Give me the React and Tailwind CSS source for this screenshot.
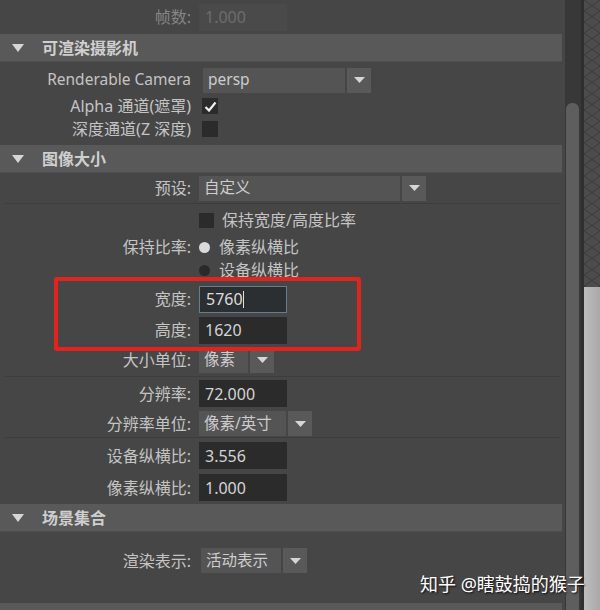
import React from 'react'

const font = "font-['Noto_Sans','Noto_Sans_CJK_SC',sans-serif]"

// down-pointing triangle used by section headers and option menus
const Tri = ({ w = 12, h = 8, className = '' }) => (
  <svg width={w} height={h} viewBox={`0 0 ${w} ${h}`} className={className}>
    <polygon points={`0,0 ${w},0 ${w / 2},${h}`} fill="#d6d6d6" />
  </svg>
)

const Header = ({ title }) => (
  <div className="h-[28px] mr-[3px] bg-[#595959] flex items-center border-b border-[#4f4f4f]">
    <Tri className="ml-[12px]" />
    <span className="ml-[18px] text-[16px] font-bold text-[#cfcfcf]">{title}</span>
  </div>
)

const Row = ({ h, label, dim, latin, children, gap = 'ml-[8px]' }) => (
  <div className={`flex items-center ${h}`}>
    <div
      className={`w-[191px] text-right whitespace-nowrap ${latin ? 'text-[15.5px]' : 'text-[16px]'} ${
        dim ? 'text-[#858585]' : 'text-[#c4c4c4]'
      }`}
    >
      {label}
    </div>
    <div className={`${gap} flex items-center`}>{children}</div>
  </div>
)

const Field = ({ value, focused, disabled }) => (
  <div
    className={`w-[88px] h-[27px] flex items-center pl-[6px] text-[16px] ${
      disabled
        ? 'bg-[#4a4a4a] text-[#6d6d6d]'
        : focused
        ? 'bg-[#2c2f31] border border-[#627d92] text-[#dcdcdc]'
        : 'bg-[#2b2b2b] text-[#d4d4d4]'
    }`}
  >
    {value}
    {focused && <span className="w-px h-[17px] bg-[#e0e0e0]" />}
  </div>
)

const Dropdown = ({ value, w }) => (
  <div className="flex h-[25px] gap-[2px]">
    <div className={`${w} bg-[#545454] flex items-center pl-[5px] text-[15.5px] text-[#cdcdcd]`}>{value}</div>
    <div className="w-[24px] bg-[#595959] flex items-center justify-center">
      <Tri w={11} h={6} />
    </div>
  </div>
)

const Check = ({ on }) => (
  <div className="w-[16px] h-[16px] bg-[#2b2b2b] flex items-center justify-center">
    {on && (
      <svg width="13" height="11" viewBox="0 0 13 11">
        <path d="M1.5 6 L5 9.5 L11.5 1.5" stroke="#f0f0f0" strokeWidth="2.2" fill="none" />
      </svg>
    )}
  </div>
)

const Radio = ({ on }) => (
  <div className={`w-[11px] h-[11px] rounded-full ${on ? 'bg-[#dadada]' : 'bg-[#2a2a2a]'}`} />
)

const Sep = () => <div className="mx-[5px] h-px bg-[#3d3d3d]" />

// crosshatch strip beside the scrollbar
const Hatch = () => (
  <svg width="16" height="287" className="block">
    <defs>
      <pattern id="hatch" width="16" height="22" patternUnits="userSpaceOnUse">
        <rect width="16" height="22" fill="#4c4c4c" />
        <path d="M0 0 L16 11 L0 22 M16 0 L0 11 L16 22" stroke="#3a3a3a" strokeWidth="1" fill="none" />
      </pattern>
    </defs>
    <rect width="16" height="287" fill="url(#hatch)" />
  </svg>
)

export default function App() {
  return (
    <div className={`relative w-[600px] h-[610px] overflow-hidden flex bg-[#464646] ${font}`}>
      {/* attribute panel */}
      <div className="w-[565px] h-full shrink-0">
        <Row h="h-[34px]" label="帧数:" dim>
          <Field value="1.000" disabled />
        </Row>

        <Header title="可渲染摄影机" />
        <div className="h-[4px]" />
        <Row h="h-[28px]" label="Renderable Camera" latin gap="ml-[12px]">
          <Dropdown value="persp" w="w-[142px]" />
        </Row>
        <Row h="h-[24px]" label="Alpha 通道(遮罩)" gap="ml-[11px]">
          <Check on />
        </Row>
        <Row h="h-[22px]" label="深度通道(Z 深度)" gap="ml-[11px]">
          <Check />
        </Row>
        <div className="h-[5px]" />

        <Header title="图像大小" />
        <Row h="h-[30px]" label="预设:">
          <Dropdown value="自定义" w="w-[201px]" />
        </Row>
        <Sep />
        <div className="flex items-center h-[32px] pl-[199px]">
          <div className="w-[15px] h-[15px] bg-[#2b2b2b]" />
          <span className="ml-[8px] text-[16px] text-[#c4c4c4]">保持宽度/高度比率</span>
        </div>
        <Row h="h-[22px]" label="保持比率:">
          <Radio on />
          <span className="ml-[9px] text-[16px] text-[#c4c4c4]">像素纵横比</span>
        </Row>
        <Row h="h-[24px]" label="">
          <Radio />
          <span className="ml-[9px] text-[16px] text-[#c4c4c4]">设备纵横比</span>
        </Row>
        <Row h="h-[34px]" label="宽度:">
          <Field value="5760" focused />
        </Row>
        <Row h="h-[28px]" label="高度:">
          <Field value="1620" />
        </Row>
        <Row h="h-[32px]" label="大小单位:">
          <Dropdown value="像素" w="w-[49px]" />
        </Row>
        <Sep />
        <Row h="h-[33px]" label="分辨率:">
          <Field value="72.000" />
        </Row>
        <Row h="h-[27px]" label="分辨率单位:">
          <Dropdown value="像素/英寸" w="w-[87px]" />
        </Row>
        <Sep />
        <Row h="h-[35px]" label="设备纵横比:">
          <Field value="3.556" />
        </Row>
        <Row h="h-[29px]" label="像素纵横比:">
          <Field value="1.000" />
        </Row>
        <div className="h-[2px]" />

        <Header title="场景集合" />
        <Row h="h-[57px]" label="渲染表示:" gap="ml-[10px]">
          <Dropdown value="活动表示" w="w-[80px]" />
        </Row>
        <div className="h-[14px]" />
        <Header title="" />
      </div>

      {/* scrollbar */}
      <div className="w-[16px] h-full shrink-0 bg-[#383838] flex flex-col">
        <div className="h-[103px] shrink-0" />
        <div className="ml-px w-[13px] flex-1 bg-[#5e5e5e] rounded-t-[6px]" />
      </div>
      <div className="w-[3px] h-full shrink-0 bg-[#2f2f2f]" />

      {/* neighbouring pane edge */}
      <div className="w-[16px] h-full shrink-0 flex flex-col">
        <Hatch />
        <div className="flex-1 bg-gradient-to-r from-[#bdbdbd] to-[#a9a9a9]" />
      </div>

      {/* highlight around width / height */}
      <div className="absolute left-[54px] top-[277px] w-[307px] h-[74px] border-4 border-[#e3231c] rounded-[3px]" />

      <div className="absolute left-[420px] top-[571px] text-[18px] text-white whitespace-nowrap [text-shadow:1px_1px_2px_rgba(0,0,0,0.85)]">
        知乎 @瞎鼓捣的猴子
      </div>
    </div>
  )
}
